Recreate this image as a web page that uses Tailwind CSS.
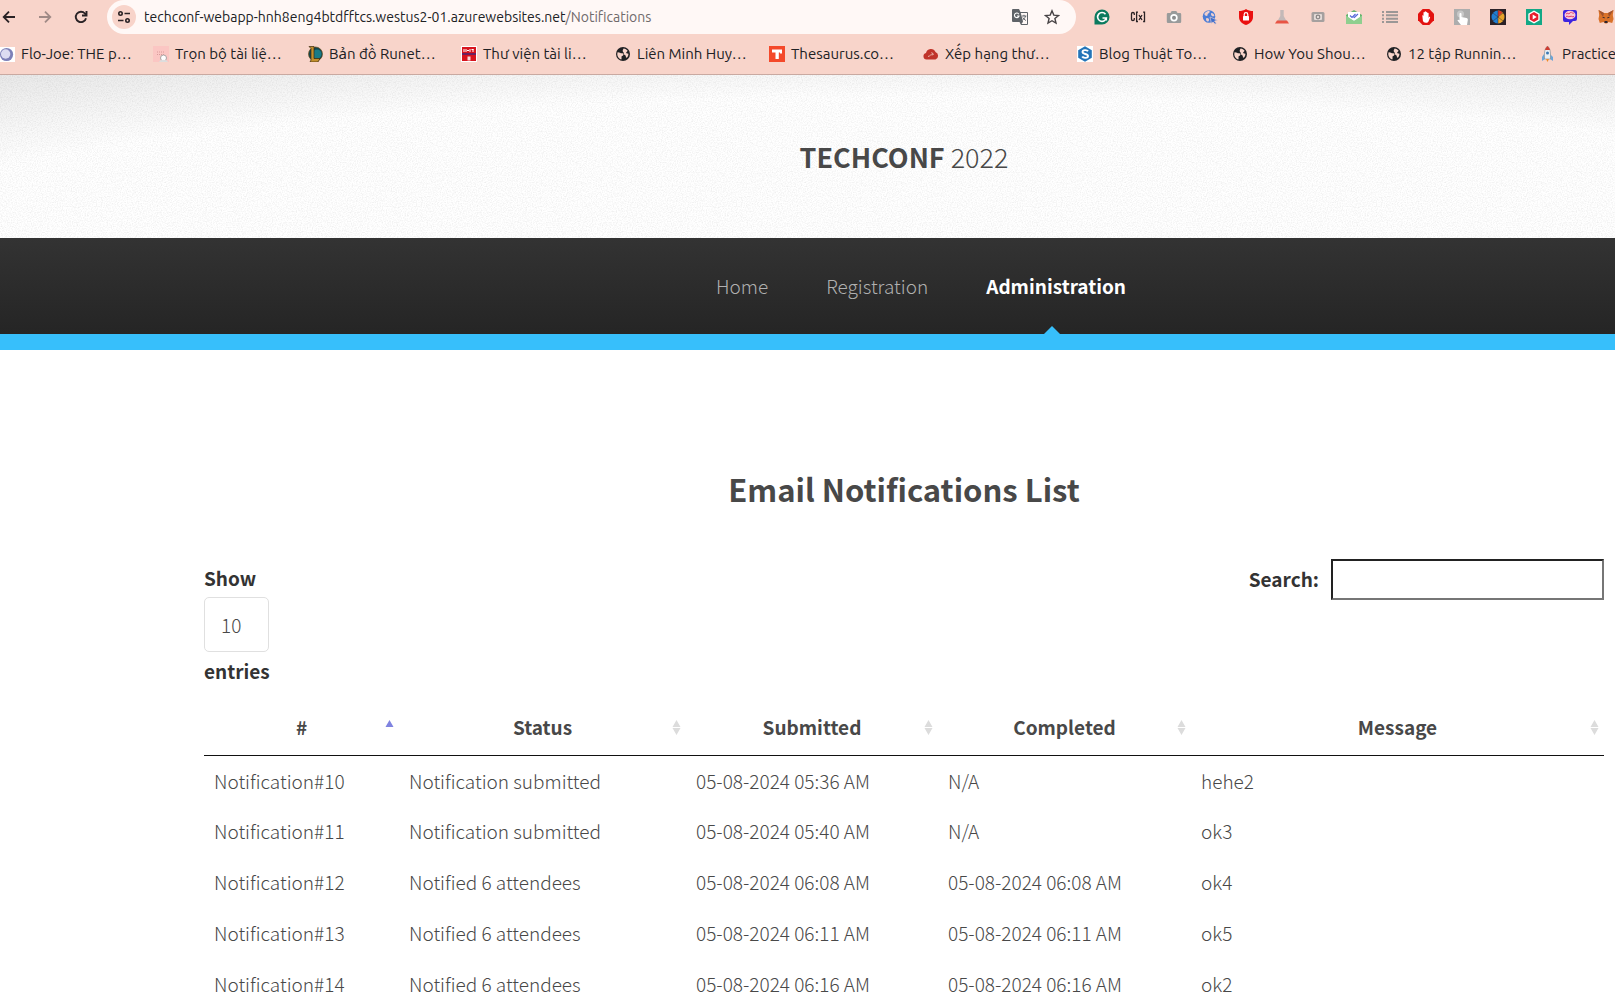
<!DOCTYPE html>
<html lang="en">
<head>
<meta charset="utf-8">
<meta name="viewport" content="width=device-width, initial-scale=1">
<title>TechConf 2022 - Notifications</title>
<script src="https://cdn.jsdelivr.net/npm/@tailwindcss/browser@4"></script>
</head>
<body class="h-screen overflow-hidden bg-white">

<svg class="hidden" aria-hidden="true">
  <symbol id="globe" viewBox="0 0 16 16"><circle cx="8" cy="8" r="7" fill="#202124"/><path d="M2.6 6.2C4.600 6 5.500 7.500 7.200 7.300c1.200-.1 1.600 1 1 1.900-.5.800-1.600.600-1.700 1.600 0 1 .3 1.600-.2 2.600C4.200 13 2.200 10.500 2.300 8c0-.6.1-1.200.3-1.800zM8.600 2.400c1.600.1 3.200 1.100 4 2.300-.2 1-1.300 1-1.500 2 .4.900 1.500.7 2.300 1 .1 1.600-.6 3-1.600 4.100-.9-.1-1-1-1-1.800-.2-1-1.400-.9-1.900-1.800-.2-1.300 0-1.900-1-2.500-.6-1.500.2-2.200.7-3.300z" fill="#f8d4ca"/></symbol>
</svg>

<!-- Browser chrome -->
<div class="h-[75px] overflow-hidden border-b border-[#c9a9a1] bg-[#f8d4ca] font-['Ubuntu','Noto_Sans',sans-serif] text-[#202124]">
  <div class="flex h-[34px] items-center">
    <div class="flex w-[107px] shrink-0 items-center gap-5 pl-px">
      <button aria-label="Back" class="size-4"><svg viewBox="0 0 16 16" fill="none" stroke="#2a2225" stroke-width="1.8"><path d="M14 8H3M8 2.700 2.700 8 8 13.300"/></svg></button>
      <button aria-label="Forward" class="size-4"><svg viewBox="0 0 16 16" fill="none" stroke="#a08a86" stroke-width="1.8"><path d="M2 8h11M8 2.700 13.300 8 8 13.300"/></svg></button>
      <button aria-label="Reload" class="size-4"><svg viewBox="0 0 16 16" fill="none" stroke="#2a2225" stroke-width="1.900"><path d="M13 9.200A5.200 5.200 0 1 1 11.900 4.500l1.500 1.500"/><path d="M13.500 2v4.500H9"/></svg></button>
    </div>
    <div class="flex h-full grow items-center rounded-r-full rounded-l-full bg-[#fff8f6] pl-[5px] pr-4">
      <button aria-label="Site information" class="flex size-6 shrink-0 items-center justify-center rounded-full bg-[#f8d4ca]"><svg class="size-4" viewBox="0 0 16 16" fill="none" stroke="#2a2225" stroke-width="1.600"><circle cx="4.500" cy="4.500" r="1.700"/><path d="M8.500 4.500H14M2 11.500h5.500"/><circle cx="11.500" cy="11.500" r="1.700"/></svg></button>
      <div class="ml-2 grow whitespace-nowrap text-[14px]">techconf-webapp-hnh8eng4btdfftcs.westus2-01.azurewebsites.net<span class="text-[#6f6a6b]">/Notifications</span></div>
      <div class="flex items-center gap-4">
        <button aria-label="Translate this page" class="size-4"><svg viewBox="0 0 16 16"><path d="M1 0h6l1.500 3H15a1 1 0 0 1 1 1v11a1 1 0 0 1-1 1H9l-1.500-3H1a1 1 0 0 1-1-1V1a1 1 0 0 1 1-1z" fill="#5f6368"/><path d="M8.800 4H15v11H9.500L11 12.800z" fill="#fff8f6"/><path d="M6.800 5.200A2.300 2.300 0 1 0 7 7H4.900" fill="none" stroke="#fff" stroke-width="1.100"/><path d="M9.800 7h4.600M12 5.800V7M13.500 7c-.5 2-1.500 3-3 4M10.800 8.500c.7 1.300 1.700 2.200 3.100 3" fill="none" stroke="#5f6368"/></svg></button>
        <button aria-label="Bookmark this tab" class="size-4"><svg viewBox="0 0 16 16" fill="none" stroke="#474345" stroke-width="1.400"><path d="m8 1.800 1.800 4.300 4.700.4-3.600 3 1.100 4.600L8 11.700l-4 2.400 1.100-4.600-3.600-3 4.700-.4z"/></svg></button>
      </div>
    </div>
    <div class="-mr-[9px] ml-2 flex shrink-0 items-center">
      <button aria-label="Grammar check" class="flex w-9 justify-center"><svg class="size-4" viewBox="0 0 16 16"><path d="M8 .5a7.500 7.500 0 1 1 0 15H.5V8A7.500 7.500 0 0 1 8 .5z" fill="#0b7a5e"/><path d="M11.500 5.200A4.400 4.400 0 1 0 12.300 9H8.500M12.300 9v2.500" fill="none" stroke="#fff" stroke-width="1.600"/></svg></button>
      <button aria-label="Code extension" class="flex w-9 justify-center"><svg class="size-4" viewBox="0 0 16 16" fill="none" stroke="#2a2225" stroke-width="1.300"><path d="M4.300 6V4.800c0-.9-.5-1.300-1.400-1.300s-1.400.4-1.400 1.300v5.400c0 .9.500 1.300 1.400 1.300s1.400-.4 1.400-1.300V9M8 3.200H6.600v9.300H8M13.100 3.200h1.400v9.300h-1.400M9 6l3 5M12 6l-3 5"/></svg></button>
      <button aria-label="Screenshot" class="flex w-9 justify-center"><svg class="size-4" viewBox="0 0 16 16"><path d="M2 4h2.500L5.700 2h4.600l1.200 2H14a1.200 1.200 0 0 1 1.200 1.200v7.600A1.200 1.200 0 0 1 14 14H2a1.200 1.200 0 0 1-1.200-1.200V5.200A1.200 1.200 0 0 1 2 4z" fill="#999b9b"/><circle cx="8" cy="8.800" r="3.700" fill="#fff"/><circle cx="8" cy="8.800" r="2" fill="#8b8d8e"/></svg></button>
      <button aria-label="Globe extension" class="flex w-9 justify-center"><svg class="size-4" viewBox="0 0 16 16"><circle cx="7" cy="7.500" r="6.300" fill="#4c7dd6"/><path d="M6 2c1.500-.5 2 .5 1.500 1.500S5.500 4.500 5.500 6 3 7 2.500 5.500 4.500 2.500 6 2zM9.500 4c1.500 0 3 1.500 2.800 3-.8.500-2.300.5-2.800-.5S8.500 4.300 9.500 4zM5 9c1.200 0 2.200.7 2 2s-1 2-2 1.300S3.500 9 5 9z" fill="#efcfcd"/><path d="m8 8 7.500 3.200-3 .8 1.800 2.200-1.300 1-1.900-2.300-1.600 1.600z" fill="#3f6fcd" stroke="#f8d4ca" stroke-width=".6"/></svg></button>
      <button aria-label="Password lock" class="flex w-9 justify-center"><svg class="size-4" viewBox="0 0 16 16"><path d="M8 0c2 1.500 4.500 2 7 2v6c0 4-3 6.800-7 8-4-1.200-7-4-7-8V2c2.500 0 5-.5 7-2z" fill="#ea1010"/><rect x="5" y="7" width="6" height="4.500" rx=".5" fill="#fff"/><path d="M6.200 7V5.500a1.800 1.800 0 0 1 3.600 0V7" fill="none" stroke="#fff" stroke-width="1.200"/></svg></button>
      <button aria-label="Lab flask" class="flex w-9 justify-center"><svg class="size-4" viewBox="0 0 16 16"><path d="M6.300 1h3.400v6l2.800 5h-9l2.800-5z" fill="#c3b9b8"/><path d="M3 11.500h10l2 3H1z" fill="#e85444"/></svg></button>
      <button aria-label="Capture" class="flex w-9 justify-center"><svg class="size-4" viewBox="0 0 16 16"><rect x="1.500" y="3" width="13" height="10" rx="1.500" fill="#a5a09f"/><rect x="4" y="5" width="8" height="6" rx="1" fill="#e3dad7"/><circle cx="8" cy="8" r="1.800" fill="none" stroke="#8a8685" stroke-width="1.200"/></svg></button>
      <button aria-label="Mail tracker" class="flex w-9 justify-center"><svg class="size-4" viewBox="0 0 16 16"><path d="M0 6 8 1l8 5v9H0z" fill="#66b36e"/><path d="M2 3h12v6l-6 3-6-3z" fill="#fff"/><path d="M0 6.500 8 12l8-5.500V15H0z" fill="#8fcf8f"/><path d="m4 6.500 2 2L9.500 5M7.500 8l.8.500L12 5" fill="none" stroke="#5668d8" stroke-width="1.200"/></svg></button>
      <button aria-label="List" class="flex w-9 justify-center"><svg class="size-4" viewBox="0 0 16 16" fill="#9b9796"><path d="M0 2h2v2H0zM4 2h12v2H4zM0 5.300h2v2H0zM4 5.300h12v2H4zM0 8.700h2v2H0zM4 8.700h12v2H4zM0 12h2v2H0zM4 12h12v2H4z"/></svg></button>
      <button aria-label="Ad blocker" class="flex w-9 justify-center"><svg class="size-4" viewBox="0 0 16 16"><path d="M4.700 0h6.600L16 4.700v6.600L11.300 16H4.700L0 11.300V4.700z" fill="#e3120f"/><path d="M4.300 6.500c.7-.4 1 0 1.200.7V3.600c0-.9 1.200-.9 1.200 0V2.800c0-.9 1.300-.9 1.300 0v.6c0-.9 1.300-.9 1.300 0v.9c0-.9 1.300-.9 1.300 0v4.800l.5-1c.5-.6 1.200-.2 1 .5l-1.500 3.600c-.5 1.100-1.300 1.500-2.700 1.500-1.800 0-2.600-.7-3-2z" fill="#fff"/></svg></button>
      <button aria-label="Click helper" class="flex w-9 justify-center"><svg class="size-4" viewBox="0 0 16 16"><path d="M0 0h16v16H0z" fill="#adadad"/><circle cx="6.500" cy="5" r="3.500" fill="#c8c8c8"/><path d="M5.500 5c0-1.300 2-1.300 2 0v3l5 1c1 .3 1.500 1 1.300 2L13 16H7l-3.500-4.500c0-1 1-1.200 2-.3z" fill="#fff"/></svg></button>
      <button aria-label="Colour wheel" class="flex w-9 justify-center"><svg class="size-4" viewBox="0 0 16 16"><path d="M0 0h16v16H0z" fill="#2b2228"/><path d="M8 1.500a6.500 6.500 0 0 0 0 13z" fill="#1f7ed2"/><path d="M8 1.500a6.500 6.500 0 0 1 0 13z" fill="#e9a52a"/><path d="M8 1.500a6.500 6.500 0 0 1 4.500 2L8 8z" fill="#d83a28"/><path d="M8 1v14M3 4l10 8M13 4 3 12" stroke="#3a2a2c" stroke-width=".5"/></svg></button>
      <button aria-label="Video player" class="flex w-9 justify-center"><svg class="size-4" viewBox="0 0 16 16"><path d="M0 0h16v16H0z" fill="#12a886"/><path d="m8 1.500 5.700 3.200v6.600L8 14.500l-5.700-3.200V4.700z" fill="#fff"/><path d="m8 3 4.300 2.500v5L8 13l-4.300-2.500v-5z" fill="#e81c2c"/><path d="m6.700 5.500 4 2.500-4 2.500z" fill="#fff"/></svg></button>
      <button aria-label="Assistant" class="flex w-9 justify-center"><svg class="size-4" viewBox="0 0 16 16"><path d="M3 1h10a2 2 0 0 1 2 2v7a2 2 0 0 1-2 2l-2 0-4 4v-3H3a2 2 0 0 1-2-2V3a2 2 0 0 1 2-2z" fill="#3d24e0"/><ellipse cx="8" cy="6" rx="5.500" ry="4.300" fill="#fbc7d6"/><path d="M4 5c2-2 2 1 4-1s2 1 4 0M4 7.500c2-1 2 1 4 0s2 1 4 0" fill="none" stroke="#df3c6c"/></svg></button>
      <button aria-label="Wallet" class="flex w-9 justify-center"><svg class="size-4" viewBox="0 0 16 16"><path d="m.5 1 5.500 3h4l5.500-3-.7 5 .7 4-1.300 4-3.700-1-1.500 1.500H7L5.500 13l-3.700 1L.5 10l.7-4z" fill="#d9722a"/><path d="M.5 1 6 4 5 8zM15.500 1 10 4l1 4z" fill="#a0522d"/><path d="M4 8h2.500v1.500zM12 8H9.500v1.500zM6.500 12h3v2h-3z" fill="#2b2430"/></svg></button>
    </div>
  </div>
  <nav aria-label="Bookmarks" class="flex h-10 items-center text-[15px] whitespace-nowrap">
    <a href="#" class="flex w-[153px] shrink-0 items-center gap-[6px]"><svg class="size-[15px]" viewBox="0 0 16 16"><path d="M0 0h16v16H0z" fill="#fff"/><circle cx="7" cy="8" r="7" fill="#7d80b8"/><circle cx="6" cy="7.500" r="5" fill="#dcdcf2"/></svg>Flo-Joe: THE p…</a>
    <a href="#" class="flex w-[154px] shrink-0 items-center gap-[6px]"><svg class="size-4" viewBox="0 0 16 16"><path d="M0 0h16v16H0z" fill="#fbc6c3"/><path d="M4 6h8M4 8.500h7" stroke="#d99a9a" stroke-dasharray="1 1"/><circle cx="10.500" cy="12" r="3" fill="#fff" stroke="#a9a3a3"/><path d="M6 16c1-3 8-3 9 0z" fill="#ddd"/></svg>Trọn bộ tài liệ…</a>
    <a href="#" class="flex w-[154px] shrink-0 items-center gap-[6px]"><svg class="size-4" viewBox="0 0 16 16"><circle cx="8.500" cy="8" r="7" fill="#12464f" stroke="#6b5020" stroke-width=".7"/><circle cx="10" cy="8" r="4.500" fill="#187b86"/><path d="M2 .5h5v12h6L11 16H3l1-2V2.500z" fill="#c28f2c" stroke="#3a2a10" stroke-width=".7"/></svg>Bản đồ Runet…</a>
    <a href="#" class="flex w-[154px] shrink-0 items-center gap-[6px]"><svg class="size-4" viewBox="0 0 16 16"><path d="M0 0h16v16H0z" fill="#fff"/><path d="M1 1h14v14H1z" fill="#d7141e"/><path d="M1 7h14v2H1z" fill="#6a2060"/><path d="M3 3v3M5 3v3M6 4.500h2M9 3v3M10.500 3.500h2M12 3v3" stroke="#fff"/><path d="M6.500 10.500h3v4h-3z" fill="#f9dada"/></svg>Thư viện tài li…</a>
    <a href="#" class="flex w-[154px] shrink-0 items-center gap-[6px]"><svg class="size-4"><use href="#globe"/></svg>Liên Minh Huy…</a>
    <a href="#" class="flex w-[154px] shrink-0 items-center gap-[6px]"><svg class="size-4" viewBox="0 0 16 16"><path d="M0 0h16v16H0z" fill="#f4492a"/><path d="M3 3.500h10v4h-2V6.500H9.800V13H6.500V6.500H3z" fill="#fff"/></svg>Thesaurus.co…</a>
    <a href="#" class="flex w-[154px] shrink-0 items-center gap-[6px]"><svg class="size-4" viewBox="0 0 16 16"><path d="M3.500 13.500a3.300 3.300 0 0 1-.5-6.500 5 5 0 0 1 9.500-1 4 4 0 0 1 0 7.500z" fill="#c0342a"/><path d="M5 10.500c2 0 3-3 5-2.500M8.500 6.500 10.500 8 9 9.500" fill="none" stroke="#eab5aa"/></svg>Xếp hạng thư…</a>
    <a href="#" class="flex w-[155px] shrink-0 items-center gap-[6px]"><svg class="size-4" viewBox="0 0 16 16"><path d="M0 0h16v16H0z" fill="#fff"/><path d="m8 .3 6.800 3.900v7.600L8 15.700l-6.800-3.900V4.200z" fill="#2474b8"/><path d="M11 5.300C10 3.600 5.500 3.700 5.500 6S11 7.700 11 10s-4.700 2.500-5.800.6" fill="none" stroke="#fff" stroke-width="1.900"/></svg>Blog Thuật To…</a>
    <a href="#" class="flex w-[154px] shrink-0 items-center gap-[6px]"><svg class="size-4"><use href="#globe"/></svg>How You Shou…</a>
    <a href="#" class="flex w-[154px] shrink-0 items-center gap-[6px]"><svg class="size-4"><use href="#globe"/></svg>12 tập Runnin…</a>
    <a href="#" class="flex w-[154px] shrink-0 items-center gap-[6px]"><svg class="size-4" viewBox="0 0 16 16"><path d="m4 8-2 3v4l3-2zM10 8l3 3v4l-3-2z" fill="#6aa5d8"/><path d="M7.500 0C5 2.500 4.500 5 4.500 8v5h6V8c0-3-.5-5.500-3-8z" fill="#e9eef2" stroke="#7b858c" stroke-width=".6"/><path d="M7.500 0C6.200 1.300 5.500 2.300 5 4h5c-.5-1.700-1.200-2.700-2.500-4z" fill="#cf3b30"/><circle cx="7.500" cy="7" r="1.500" fill="#3b79b4"/><path d="M6 13h3l-1.500 3z" fill="#f08a24"/></svg>Practice</a>
  </nav>
</div>

<!-- Site -->
<div class="font-['Noto_Sans_CJK_SC',sans-serif] text-[19px] font-light text-[#484848]">
  <header class="relative flex h-[163px] items-center justify-center bg-[radial-gradient(90%_120%_at_56%_100%,#fff_72%,#e8e8e8_105%)] pl-[204px] pr-[11px]">
    <svg class="absolute inset-0 size-full" aria-hidden="true">
      <filter id="grain"><feTurbulence type="fractalNoise" baseFrequency="0.8" numOctaves="2"/><feColorMatrix values="0 0 0 0 0  0 0 0 0 0  0 0 0 0 0  .14 0 0 0 -.055"/></filter>
      <rect width="100%" height="100%" filter="url(#grain)"/>
    </svg>
    <h1 class="relative text-[27px] leading-10 text-[#484848]"><a href="#"><strong class="font-bold">TECHCONF</strong> 2022</a></h1>
  </header>
  <nav aria-label="Main" class="h-28 border-b-[16px] border-[#37bffb] bg-linear-to-b from-[#333] to-[#252525] pr-[11px] pl-[204px]">
    <ul class="flex h-24 items-stretch justify-center gap-[58px] pl-[34px] text-[#b0b0b0]">
      <li class="flex items-center"><a href="#">Home</a></li>
      <li class="flex items-center"><a href="#">Registration</a></li>
      <li class="relative flex items-center font-bold text-white"><a href="#">Administration</a>
        <svg class="absolute bottom-0 left-1/2 -ml-3 h-2 w-4" viewBox="0 0 16 8" aria-hidden="true"><path d="m0 8 8-8 8 8z" fill="#37bffb"/></svg></li>
    </ul>
  </nav>

  <main class="pt-[103px] pr-[11px] pl-[204px]">
    <h2 class="text-center text-[31px] leading-[72px] font-bold">Email Notifications List</h2>
    <div class="mt-[34px] flex items-start justify-between font-bold text-[#333]">
      <label class="flex flex-col items-start leading-[38px]">Show
        <select class="h-[55px] w-[65px] appearance-none rounded-[5px] border border-[#e0e0e0] bg-white px-4 font-light text-[#484848]"><option>10</option><option>25</option></select>
        entries</label>
      <label class="flex items-center gap-3">Search:<input type="search" class="h-[41px] w-[273px] border-2 border-t-[#222] border-r-[#767676] border-b-[#767676] border-l-[#222] bg-white px-2 font-light outline-none"></label>
    </div>
    <table class="mt-[9px] w-full table-fixed border-collapse">
      <colgroup><col class="w-[195px]"><col class="w-[287px]"><col class="w-[252px]"><col class="w-[253px]"><col></colgroup>
      <thead>
        <tr class="h-14 border-b border-[#111]">
          <th class="relative font-bold">#<svg class="absolute top-5 right-[5px] h-4 w-[9px]" viewBox="0 0 9 16"><path d="m.5 8 4-7 4 7z" fill="#7f83e0"/></svg></th>
          <th class="relative font-bold">Status<svg class="absolute top-5 right-[5px] h-4 w-[9px]" viewBox="0 0 9 16"><path d="m.5 8 4-7 4 7zM.5 9h8l-4 7z" fill="#dcdcdc"/></svg></th>
          <th class="relative font-bold">Submitted<svg class="absolute top-5 right-[5px] h-4 w-[9px]" viewBox="0 0 9 16"><path d="m.5 8 4-7 4 7zM.5 9h8l-4 7z" fill="#dcdcdc"/></svg></th>
          <th class="relative font-bold">Completed<svg class="absolute top-5 right-[5px] h-4 w-[9px]" viewBox="0 0 9 16"><path d="m.5 8 4-7 4 7zM.5 9h8l-4 7z" fill="#dcdcdc"/></svg></th>
          <th class="relative font-bold">Message<svg class="absolute top-5 right-[5px] h-4 w-[9px]" viewBox="0 0 9 16"><path d="m.5 8 4-7 4 7zM.5 9h8l-4 7z" fill="#dcdcdc"/></svg></th>
        </tr>
      </thead>
      <tbody>
        <tr class="h-[51px]"><td class="px-[10px]">Notification#10</td><td class="px-[10px]">Notification submitted</td><td class="px-[10px]">05-08-2024 05:36 AM</td><td class="px-[10px]">N/A</td><td class="px-[10px]">hehe2</td></tr>
        <tr class="h-[51px]"><td class="px-[10px]">Notification#11</td><td class="px-[10px]">Notification submitted</td><td class="px-[10px]">05-08-2024 05:40 AM</td><td class="px-[10px]">N/A</td><td class="px-[10px]">ok3</td></tr>
        <tr class="h-[51px]"><td class="px-[10px]">Notification#12</td><td class="px-[10px]">Notified 6 attendees</td><td class="px-[10px]">05-08-2024 06:08 AM</td><td class="px-[10px]">05-08-2024 06:08 AM</td><td class="px-[10px]">ok4</td></tr>
        <tr class="h-[51px]"><td class="px-[10px]">Notification#13</td><td class="px-[10px]">Notified 6 attendees</td><td class="px-[10px]">05-08-2024 06:11 AM</td><td class="px-[10px]">05-08-2024 06:11 AM</td><td class="px-[10px]">ok5</td></tr>
        <tr class="h-[51px]"><td class="px-[10px]">Notification#14</td><td class="px-[10px]">Notified 6 attendees</td><td class="px-[10px]">05-08-2024 06:16 AM</td><td class="px-[10px]">05-08-2024 06:16 AM</td><td class="px-[10px]">ok2</td></tr>
      </tbody>
    </table>
  </main>
</div>
</body>
</html>
